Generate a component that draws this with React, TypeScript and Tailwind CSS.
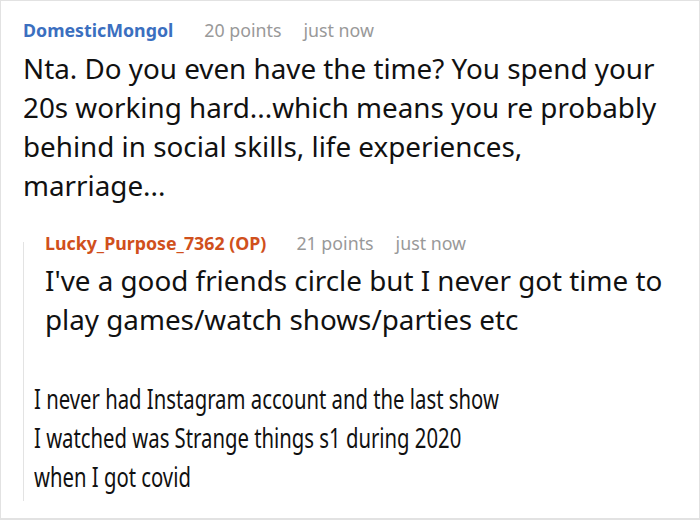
const font = { fontFamily: '"Noto Sans", "Open Sans", sans-serif' }

export default function App() {
  return (
    <div className="w-[700px] h-[520px] bg-white border border-b-2 border-[#e2e2e2] overflow-hidden" style={font}>
      <div className="pl-[22px] pt-[16px]">
        {/* top comment */}
        <div className="flex items-baseline text-[17.8px] leading-[26px]">
          <span className="font-bold text-[#3b6fbf]">DomesticMongol</span>
          <span className="ml-[31px] text-[#999]">20 points</span>
          <span className="ml-[22px] text-[#999]">just now</span>
        </div>
        <p className="mt-[6px] w-[640px] text-[27.8px] leading-[39px] text-[#111]">
          Nta. Do you even have the time? You spend your 20s working hard...which means you re probably behind in social skills, life experiences, marriage...
        </p>

        {/* reply */}
        <div className="mt-[25px] flex">
          <div className="mt-[12px] w-px shrink-0 bg-[#e3e3e3]" />
          <div className="pl-[21px] pb-[5px]">
            <div className="flex items-baseline text-[17.8px] leading-[26px]">
              <span className="font-bold text-[#d0501c]">Lucky_Purpose_7362 (OP)</span>
              <span className="ml-[30px] text-[#999]">21 points</span>
              <span className="ml-[22px] text-[#999]">just now</span>
            </div>
            <div className="mt-[5px] text-[27.8px] leading-[39px] text-[#111] whitespace-nowrap">
              <div>I've a good friends circle but I never got time to</div>
              <div>play games/watch shows/parties etc</div>
              <div className="h-[40px]" />
              <div className="-ml-[11px] origin-left scale-x-[0.73]">
                <div>I never had Instagram account and the last show</div>
                <div>I watched was Strange things s1 during 2020</div>
                <div>when I got covid</div>
              </div>
            </div>
          </div>
        </div>
      </div>
    </div>
  )
}
